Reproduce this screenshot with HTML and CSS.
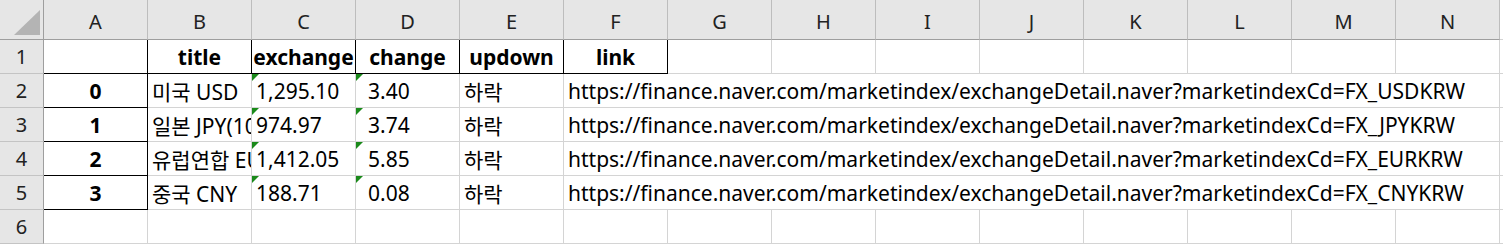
FILE: index.html
```html
<!DOCTYPE html>
<html>
<head>
    <title>Sheet1</title>
    <link rel="stylesheet" href="styles.css">
</head>
<body>
    <div class="sheet">
        <!-- column letters -->
        <div class="corner">
            <svg width="44" height="40" viewBox="0 0 44 40"><polygon points="14,35 40,35 40,10" fill="#b4b4b4"/></svg>
        </div>
        <div class="col-head">A</div>
        <div class="col-head">B</div>
        <div class="col-head">C</div>
        <div class="col-head">D</div>
        <div class="col-head">E</div>
        <div class="col-head">F</div>
        <div class="col-head">G</div>
        <div class="col-head">H</div>
        <div class="col-head">I</div>
        <div class="col-head">J</div>
        <div class="col-head">K</div>
        <div class="col-head">L</div>
        <div class="col-head">M</div>
        <div class="col-head">N</div>
        <div class="filler head-fill"></div>

        <!-- row 1: header -->
        <div class="row-head">1</div>
        <div class="cell idx"></div>
        <div class="cell hdr">title</div>
        <div class="cell hdr">exchange</div>
        <div class="cell hdr">change</div>
        <div class="cell hdr">updown</div>
        <div class="cell hdr">link</div>
        <div class="cell"></div>
        <div class="cell"></div>
        <div class="cell"></div>
        <div class="cell"></div>
        <div class="cell"></div>
        <div class="cell"></div>
        <div class="cell"></div>
        <div class="cell"></div>
        <div class="filler"></div>

        <!-- row 2 -->
        <div class="row-head">2</div>
        <div class="cell idx">0</div>
        <div class="cell clip">미국 USD</div>
        <div class="cell txt-num">1,295.10</div>
        <div class="cell txt-num shift">3.40</div>
        <div class="cell">하락</div>
        <div class="cell link">https://finance.naver.com/marketindex/exchangeDetail.naver?marketindexCd=FX_USDKRW</div>
        <div class="filler"></div>

        <!-- row 3 -->
        <div class="row-head">3</div>
        <div class="cell idx">1</div>
        <div class="cell clip">일본 JPY(100엔)</div>
        <div class="cell txt-num">974.97</div>
        <div class="cell txt-num shift">3.74</div>
        <div class="cell">하락</div>
        <div class="cell link">https://finance.naver.com/marketindex/exchangeDetail.naver?marketindexCd=FX_JPYKRW</div>
        <div class="filler"></div>

        <!-- row 4 -->
        <div class="row-head">4</div>
        <div class="cell idx">2</div>
        <div class="cell clip">유럽연합 EUR</div>
        <div class="cell txt-num">1,412.05</div>
        <div class="cell txt-num shift">5.85</div>
        <div class="cell">하락</div>
        <div class="cell link">https://finance.naver.com/marketindex/exchangeDetail.naver?marketindexCd=FX_EURKRW</div>
        <div class="filler"></div>

        <!-- row 5 -->
        <div class="row-head">5</div>
        <div class="cell idx">3</div>
        <div class="cell clip">중국 CNY</div>
        <div class="cell txt-num">188.71</div>
        <div class="cell txt-num shift">0.08</div>
        <div class="cell">하락</div>
        <div class="cell link">https://finance.naver.com/marketindex/exchangeDetail.naver?marketindexCd=FX_CNYKRW</div>
        <div class="filler"></div>

        <!-- row 6: empty -->
        <div class="row-head">6</div>
        <div class="cell"></div>
        <div class="cell"></div>
        <div class="cell"></div>
        <div class="cell"></div>
        <div class="cell"></div>
        <div class="cell"></div>
        <div class="cell"></div>
        <div class="cell"></div>
        <div class="cell"></div>
        <div class="cell"></div>
        <div class="cell"></div>
        <div class="cell"></div>
        <div class="cell"></div>
        <div class="cell"></div>
        <div class="filler"></div>
    </div>
</body>
</html>
```

FILE: styles.css
```css
body {
    margin: 0;
    background: #fff;
    font-family: "Noto Sans", "Noto Sans CJK KR", sans-serif;
    color: #000;
}
.sheet {
    display: grid;
    grid-template-columns: 44px repeat(14, 104px) 1fr;
    grid-template-rows: 40px repeat(6, 34px);
    font-size: 21px;
}
.sheet > div {
    box-sizing: border-box;
    white-space: nowrap;
}
.corner {
    background: #e6e6e6;
    border-right: 1px solid #9e9e9e;
    border-bottom: 1px solid #9e9e9e;
}
.corner svg {
    display: block;
}
.col-head {
    background: #e6e6e6;
    border-right: 1px solid #bdbdbd;
    border-bottom: 1px solid #9e9e9e;
    display: flex;
    justify-content: center;
    align-items: center;
    padding-top: 4px;
    font-size: 20px;
    color: #222;
}
.row-head {
    background: #e6e6e6;
    border-right: 1px solid #9e9e9e;
    border-bottom: 1px solid #c4c4c4;
    display: flex;
    justify-content: center;
    align-items: center;
    font-size: 20px;
    color: #222;
}
.head-fill {
    border-bottom: 1px solid #9e9e9e;
}
.filler {
    border-bottom: 1px solid #d4d4d4;
}
.cell {
    position: relative;
    border-right: 1px solid #d4d4d4;
    border-bottom: 1px solid #d4d4d4;
    display: flex;
    align-items: center;
    padding: 0 4px;
}
.cell.idx {
    justify-content: center;
    font-weight: bold;
    border-right-color: #000;
    border-bottom-color: #000;
}
.cell.hdr {
    justify-content: center;
    font-weight: bold;
    border-right-color: #000;
    border-bottom-color: #000;
    padding: 0;
}
.cell.clip {
    overflow: hidden;
}
.cell.shift {
    padding-left: 12px;
}
/* number-stored-as-text marker */
.txt-num::before {
    content: "";
    position: absolute;
    top: 0;
    left: 0;
    border-top: 7px solid #1a8a1a;
    border-right: 7px solid transparent;
}
.cell.link {
    grid-column: span 9;
}
```
